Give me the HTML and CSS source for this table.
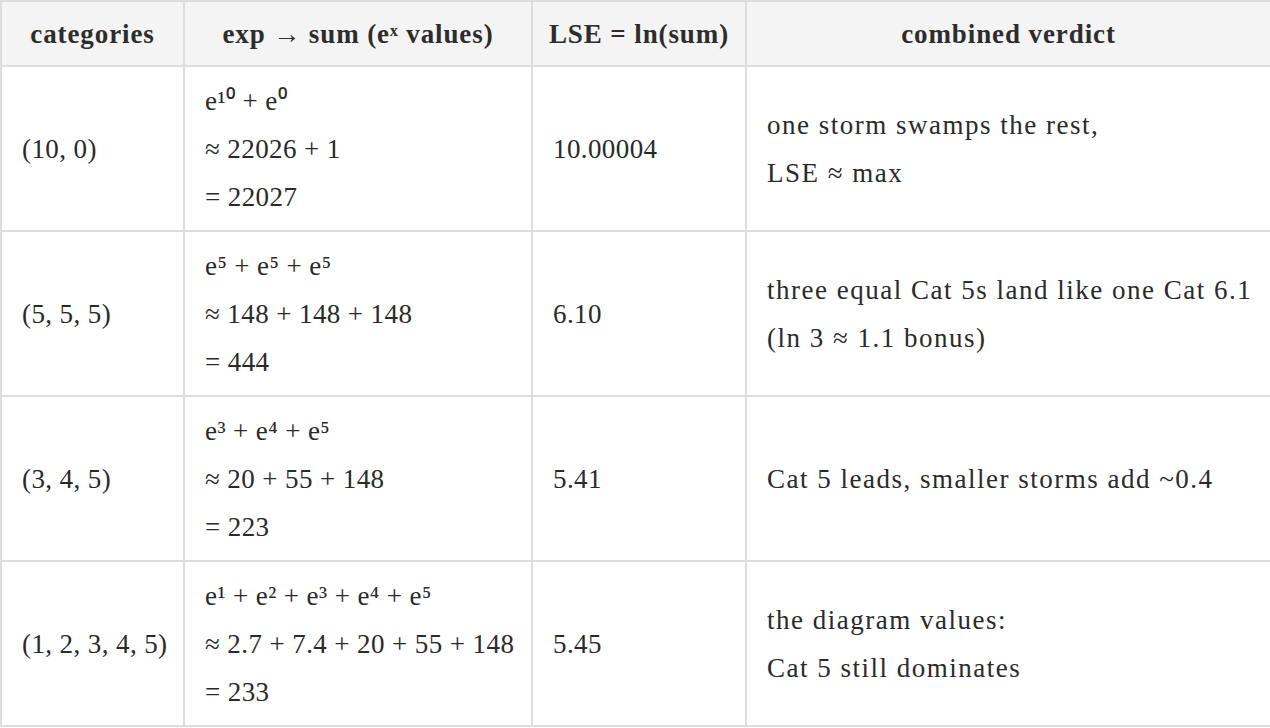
FILE: index.html
```html
<!DOCTYPE html>
<html lang="en">
<head>
<meta charset="utf-8">
<title>LSE table</title>
<link rel="stylesheet" href="styles.css">
</head>
<body>
<table class="lse">
  <colgroup>
    <col class="c1">
    <col class="c2">
    <col class="c3">
    <col class="c4">
  </colgroup>
  <thead>
    <tr>
      <th>categories</th>
      <th>exp → sum (eˣ values)</th>
      <th>LSE = ln(sum)</th>
      <th>combined verdict</th>
    </tr>
  </thead>
  <tbody>
    <tr>
      <td>(10, 0)</td>
      <td>e¹⁰ + e⁰<br>≈ 22026 + 1<br>= 22027</td>
      <td>10.00004</td>
      <td class="verdict">one storm swamps the rest,<br>LSE ≈ max</td>
    </tr>
    <tr>
      <td>(5, 5, 5)</td>
      <td>e⁵ + e⁵ + e⁵<br>≈ 148 + 148 + 148<br>= 444</td>
      <td>6.10</td>
      <td class="verdict">three equal Cat 5s land like one Cat 6.1<br>(ln 3 ≈ 1.1 bonus)</td>
    </tr>
    <tr>
      <td>(3, 4, 5)</td>
      <td>e³ + e⁴ + e⁵<br>≈ 20 + 55 + 148<br>= 223</td>
      <td>5.41</td>
      <td class="verdict">Cat 5 leads, smaller storms add ~0.4</td>
    </tr>
    <tr>
      <td>(1, 2, 3, 4, 5)</td>
      <td>e¹ + e² + e³ + e⁴ + e⁵<br>≈ 2.7 + 7.4 + 20 + 55 + 148<br>= 233</td>
      <td>5.45</td>
      <td class="verdict">the diagram values:<br>Cat 5 still dominates</td>
    </tr>
  </tbody>
</table>
</body>
</html>
```

FILE: styles.css
```css
html, body {
  margin: 0;
  padding: 0;
  background: #ffffff;
}

body {
  font-family: "Liberation Serif", "Times New Roman", serif;
  color: #2a2a2a;
}

.lse {
  width: 1270px;
  border-collapse: collapse;
  table-layout: fixed;
  font-size: 27px;
  line-height: 48px;
  letter-spacing: 0.4px;
}

.c1 { width: 183px; }
.c2 { width: 348px; }
.c3 { width: 214px; }
.c4 { width: 525px; }

.lse th,
.lse td {
  border: 2px solid #dddddd;
  padding: 10px 20px 9px;
  text-align: left;
  vertical-align: middle;
  white-space: nowrap;
}

.lse th {
  background: #f4f4f4;
  font-weight: bold;
  text-align: center;
  padding: 8px 10px 7px;
  letter-spacing: 0.9px;
  color: #2d2d2d;
}

.lse .verdict {
  letter-spacing: 1.5px;
}
```
